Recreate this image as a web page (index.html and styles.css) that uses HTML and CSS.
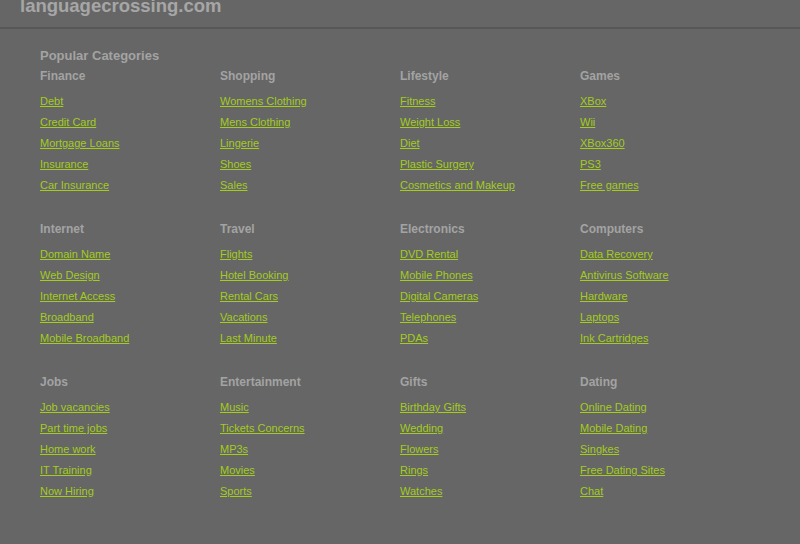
FILE: index.html
```html
<!DOCTYPE html>
<html lang="en">
  <head>
    <meta charset="UTF-8" />
    <meta name="viewport" content="width=device-width, initial-scale=1.0" />
    <title>languagecrossing.com</title>
    <link rel="stylesheet" href="styles.css">
  </head>
  <body>
    <header>
      <div class="logo">languagecrossing.com</div>
    </header>
    <div class="container">
      <h2>Popular Categories</h2>
      <div class="categories">
        <div class="category">
          <h3>Finance</h3>
          <ul>
            <li><a href="#">Debt</a></li>
            <li><a href="#">Credit Card</a></li>
            <li><a href="#">Mortgage Loans</a></li>
            <li><a href="#">Insurance</a></li>
            <li><a href="#">Car Insurance</a></li>
          </ul>
        </div>
        <div class="category">
          <h3>Shopping</h3>
          <ul>
            <li><a href="#">Womens Clothing</a></li>
            <li><a href="#">Mens Clothing</a></li>
            <li><a href="#">Lingerie</a></li>
            <li><a href="#">Shoes</a></li>
            <li><a href="#">Sales</a></li>
          </ul>
        </div>
        <div class="category">
          <h3>Lifestyle</h3>
          <ul>
            <li><a href="#">Fitness</a></li>
            <li><a href="#">Weight Loss</a></li>
            <li><a href="#">Diet</a></li>
            <li><a href="#">Plastic Surgery</a></li>
            <li><a href="#">Cosmetics and Makeup</a></li>
          </ul>
        </div>
        <div class="category">
          <h3>Games</h3>
          <ul>
            <li><a href="#">XBox</a></li>
            <li><a href="#">Wii</a></li>
            <li><a href="#">XBox360</a></li>
            <li><a href="#">PS3</a></li>
            <li><a href="#">Free games</a></li>
          </ul>
        </div>
        <div class="category">
          <h3>Internet</h3>
          <ul>
            <li><a href="#">Domain Name</a></li>
            <li><a href="#">Web Design</a></li>
            <li><a href="#">Internet Access</a></li>
            <li><a href="#">Broadband</a></li>
            <li><a href="#">Mobile Broadband</a></li>
          </ul>
        </div>
        <div class="category">
          <h3>Travel</h3>
          <ul>
            <li><a href="#">Flights</a></li>
            <li><a href="#">Hotel Booking</a></li>
            <li><a href="#">Rental Cars</a></li>
            <li><a href="#">Vacations</a></li>
            <li><a href="#">Last Minute</a></li>
          </ul>
        </div>
        <div class="category">
          <h3>Electronics</h3>
          <ul>
            <li><a href="#">DVD Rental</a></li>
            <li><a href="#">Mobile Phones</a></li>
            <li><a href="#">Digital Cameras</a></li>
            <li><a href="#">Telephones</a></li>
            <li><a href="#">PDAs</a></li>
          </ul>
        </div>
        <div class="category">
          <h3>Computers</h3>
          <ul>
            <li><a href="#">Data Recovery</a></li>
            <li><a href="#">Antivirus Software</a></li>
            <li><a href="#">Hardware</a></li>
            <li><a href="#">Laptops</a></li>
            <li><a href="#">Ink Cartridges</a></li>
          </ul>
        </div>
        <div class="category">
          <h3>Jobs</h3>
          <ul>
            <li><a href="#">Job vacancies</a></li>
            <li><a href="#">Part time jobs</a></li>
            <li><a href="#">Home work</a></li>
            <li><a href="#">IT Training</a></li>
            <li><a href="#">Now Hiring</a></li>
          </ul>
        </div>
        <div class="category">
          <h3>Entertainment</h3>
          <ul>
            <li><a href="#">Music</a></li>
            <li><a href="#">Tickets Concerns</a></li>
            <li><a href="#">MP3s</a></li>
            <li><a href="#">Movies</a></li>
            <li><a href="#">Sports</a></li>
          </ul>
        </div>
        <div class="category">
          <h3>Gifts</h3>
          <ul>
            <li><a href="#">Birthday Gifts</a></li>
            <li><a href="#">Wedding</a></li>
            <li><a href="#">Flowers</a></li>
            <li><a href="#">Rings</a></li>
            <li><a href="#">Watches</a></li>
          </ul>
        </div>
        <div class="category">
          <h3>Dating</h3>
          <ul>
            <li><a href="#">Online Dating</a></li>
            <li><a href="#">Mobile Dating</a></li>
            <li><a href="#">Singkes</a></li>
            <li><a href="#">Free Dating Sites</a></li>
            <li><a href="#">Chat</a></li>
          </ul>
        </div>
      </div>
    </div>
    <footer></footer>
  </body>
</html>
```

FILE: styles.css
```css
body {
  font-family: "Liberation Sans", Arial, sans-serif;
  margin: 0;
  padding: 0;
  background-color: #666666;
  color: #a3a3a3;
}
header {
  height: 27px;
  padding-left: 20px;
  border-bottom: 2px solid #575757;
  overflow: hidden;
}
.logo {
  margin-top: -4px;
  font-size: 18.5px;
  font-weight: bold;
  line-height: 20px;
  color: #a6a6a6;
}
.container {
  height: 496px;
  padding: 19px 0 0 40px;
}
h2 {
  margin: 0 0 4px 0;
  font-size: 13px;
  line-height: 16px;
}
.categories {
  display: grid;
  grid-template-columns: repeat(4, 180px);
}
.category {
  height: 153px;
}
h3 {
  margin: 0 0 7px 0;
  font-size: 12px;
  line-height: 16px;
}
ul {
  list-style: none;
  margin: 0;
  padding: 0;
}
li {
  font-size: 11px;
  line-height: 21px;
}
a {
  color: #a3cc1c;
}
footer {
  border-top: 2px solid #575757;
}
```
